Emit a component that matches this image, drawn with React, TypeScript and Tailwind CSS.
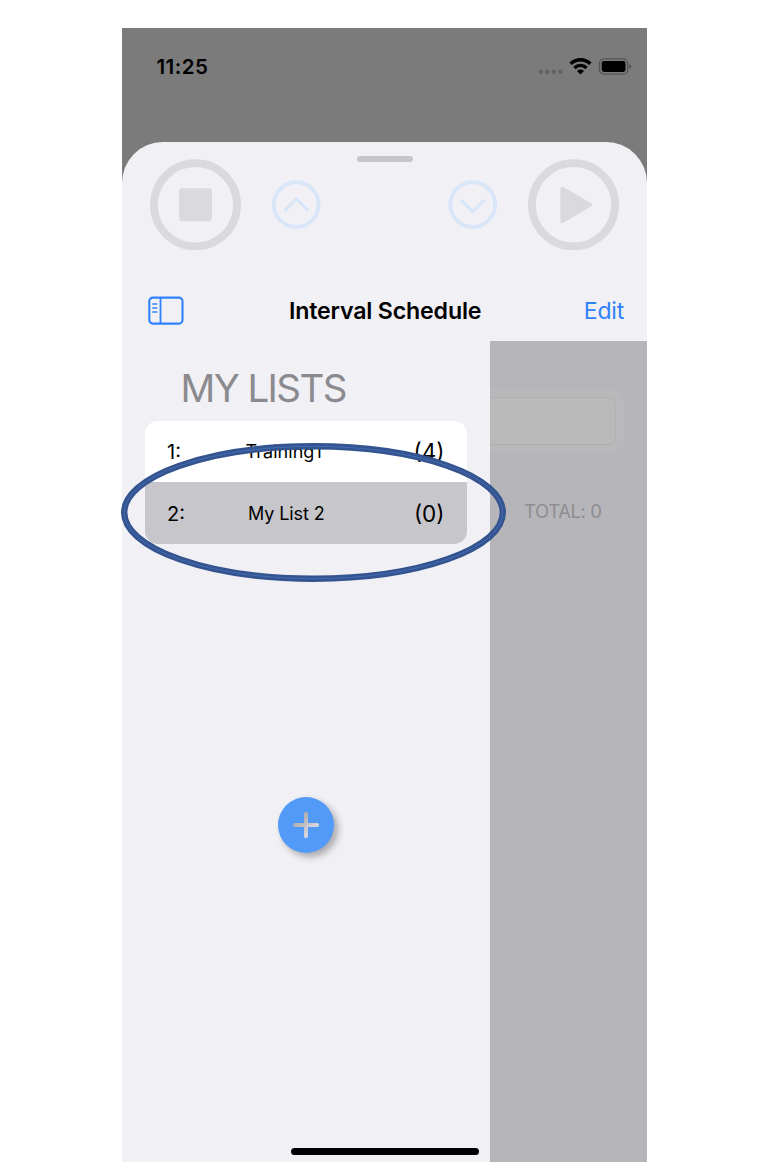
import React from "react";

function StatusBar() {
  return (
    <div className="flex h-[114px] shrink-0 items-start justify-between bg-[#7b7b7b] pl-[34.5px] pr-[15px] pt-[28px]">
      <span className="text-[20.5px] font-semibold leading-[22px] tracking-[0.45px] text-black">11:25</span>
      <svg width="94" height="22" viewBox="0 0 94 22">
        <g fill="#626262">
          <circle cx="2.7" cy="15.7" r="2.2" />
          <circle cx="9.3" cy="15.7" r="2.2" />
          <circle cx="15.8" cy="15.7" r="2.2" />
          <circle cx="22.3" cy="15.7" r="2.2" />
        </g>
        <g fill="none" stroke="#000" strokeWidth="3.5">
          <path d="M32.6 7.8C38.3 2.3 46.7 2.3 52.4 7.8" />
          <path d="M36.4 12C40 8.7 45 8.7 48.6 12" />
        </g>
        <path d="M39 15Q42.5 12.2 46 15L42.5 18.4Z" fill="#000" />
        <rect x="61.5" y="2.9" width="28.2" height="15.2" rx="4.4" fill="none" stroke="#555" strokeWidth="1.4" />
        <rect x="63.7" y="5.1" width="23.8" height="10.8" rx="2.3" fill="#000" />
        <path d="M91.2 8.2Q93.4 9 93.4 10.5Q93.4 12 91.2 12.9Z" fill="#555" />
      </svg>
    </div>
  );
}

function Controls() {
  return (
    <div className="flex h-[138px] shrink-0 flex-col items-center">
      <div className="mt-[14px] h-[5.5px] w-[56px] rounded-full bg-[#c5c5ca]" />
      <div className="mt-[-3.5px] flex w-full items-center px-[28px]">
        <svg width="91" height="92" viewBox="0 0 91 92">
          <circle cx="45.5" cy="46.8" r="41.6" fill="none" stroke="#d9d9de" strokeWidth="7.8" />
          <rect x="29" y="30.3" width="33" height="33" rx="3.5" fill="#d9d9de" />
        </svg>
        <svg className="ml-[30px]" width="50" height="50" viewBox="0 0 50 50" fill="none" stroke="#d9e6f8" strokeWidth="4">
          <circle cx="25.2" cy="25.6" r="22.4" />
          <path d="M14.5 30.8L25.4 19.8L36.4 30.8" strokeWidth="3.2" strokeLinecap="round" strokeLinejoin="round" />
        </svg>
        <svg className="ml-auto mr-[30px]" width="50" height="50" viewBox="0 0 50 50" fill="none" stroke="#d9e6f8" strokeWidth="4">
          <circle cx="24.7" cy="25.6" r="22.4" />
          <path d="M13.8 21.6L24.8 32.6L35.8 21.6" strokeWidth="3.2" strokeLinecap="round" strokeLinejoin="round" />
        </svg>
        <svg width="91" height="92" viewBox="0 0 91 92">
          <circle cx="45.5" cy="46.8" r="41.6" fill="none" stroke="#d9d9de" strokeWidth="7.8" />
          <path d="M34.4 30.8L62 46.8L34.4 62.9Z" fill="#d9d9de" stroke="#d9d9de" strokeWidth="4" strokeLinejoin="round" />
        </svg>
      </div>
    </div>
  );
}

function NavBar() {
  return (
    <div className="flex h-[61px] shrink-0 items-center justify-between pl-[26px] pr-[23px]">
      <svg width="36" height="30" viewBox="0 0 36 30" fill="none" stroke="#2f82fb">
        <rect x="1.3" y="1.6" width="33.2" height="26" rx="3.6" strokeWidth="2.1" />
        <path d="M12.5 2V27" strokeWidth="1.8" />
        <path d="M4.8 8H8.8M4.8 12H8.8M4.8 16H8.8" strokeWidth="1.4" strokeLinecap="round" />
      </svg>
      <h1 className="ml-[2.5px] text-[23.2px] font-semibold leading-[28px] tracking-[-0.18px] text-black">Interval Schedule</h1>
      <span className="text-[23px] leading-[28px] tracking-[-0.2px] text-[#2f82fb]">Edit</span>
    </div>
  );
}

interface ListRowProps {
  index: string;
  name: string;
  count: string;
  selected?: boolean;
}

function ListRow({ index, name, count, selected }: ListRowProps) {
  return (
    <div className={selected ? "flex h-[62px] items-center bg-[#c7c6cb] px-[22.5px] pt-[2px]" : "flex h-[61px] items-center bg-white px-[22.5px] pt-px"}>
      <span className="w-[80px] text-[20px]">{index}</span>
      <span className={selected ? "ml-[1px] text-[18px] tracking-[-0.1px]" : "ml-[-1.5px] text-[18px] tracking-[0.05px]"}>{name}</span>
      <span className="ml-auto text-[22.5px]">{count}</span>
    </div>
  );
}

function Sidebar() {
  return (
    <div className="flex w-[367.7px] shrink-0 flex-col pl-[22.5px] pr-[22.7px]">
      <h2 className="mt-[24px] pl-[36px] text-[38.5px] leading-[46px] tracking-[-1.6px] text-[#8b8a8f]">MY LISTS</h2>
      <div className="mt-[9.5px] overflow-hidden rounded-[13px]">
        <ListRow index="1:" name="Training1" count="(4)" />
        <ListRow index="2:" name="My List 2" count="(0)" selected />
      </div>
      <button className="ml-[133.5px] mt-[253.5px] flex h-[56px] w-[56px] items-center justify-center rounded-full bg-[#529af7] shadow-[4px_4px_7px_rgba(0,0,0,0.3)]">
        <svg width="28" height="28" viewBox="0 0 28 28">
          <defs>
            <linearGradient id="plusFill" x1="0" y1="0" x2="1" y2="1">
              <stop offset="0.2" stopColor="#aaa9ad" />
              <stop offset="0.7" stopColor="#d5d4d8" />
            </linearGradient>
          </defs>
          <path d="M12 3Q12 .8 14 .8Q16 .8 16 3V12H25Q27.2 12 27.2 14Q27.2 16 25 16H16V25Q16 27.2 14 27.2Q12 27.2 12 25V16H3Q.8 16 .8 14Q.8 12 3 12H12Z" fill="url(#plusFill)" />
        </svg>
      </button>
    </div>
  );
}

function DimmedDetail() {
  return (
    <div className="flex flex-1 flex-col overflow-hidden bg-[#b6b5ba]">
      <div className="mt-[49px] mr-[23px] h-[62px] rounded-r-[12px] bg-[#b9b9bb] py-[7px] pr-[8px]">
        <div className="h-full rounded-r-[8px] border border-l-0 border-[#b0b0b2] bg-[#bababb]" />
      </div>
      <span className="mt-[47px] pl-[34.3px] text-[18.5px] leading-[24px] tracking-[-0.4px] text-[#8e8d92]">TOTAL: 0</span>
    </div>
  );
}

export default function App() {
  return (
    <div className="h-[1162px] w-[770px] overflow-hidden bg-white pl-[122px] pt-[28px] font-[Inter,sans-serif] text-black">
      <div className="relative flex h-[1134px] w-[525px] flex-col bg-[linear-gradient(#7b7b7b_200px,#f1f0f5_200px)]">
        <StatusBar />
        <main className="relative flex flex-1 flex-col overflow-hidden rounded-t-[41px] bg-[#f1f0f5]">
          <Controls />
          <NavBar />
          <div className="flex flex-1">
            <Sidebar />
            <DimmedDetail />
          </div>
          <div className="absolute bottom-[7px] left-[169px] h-[7px] w-[188px] rounded-full bg-black" />
        </main>
        <svg className="absolute left-[-4px] top-[411px]" width="392" height="148" viewBox="0 0 392 148" fill="none">
          <ellipse cx="195.5" cy="73.5" rx="189.3" ry="66.2" stroke="#34548f" strokeWidth="6.4" />
          <ellipse cx="195.5" cy="73.5" rx="189.3" ry="66.2" stroke="#446bb4" strokeWidth="1" />
        </svg>
      </div>
    </div>
  );
}
